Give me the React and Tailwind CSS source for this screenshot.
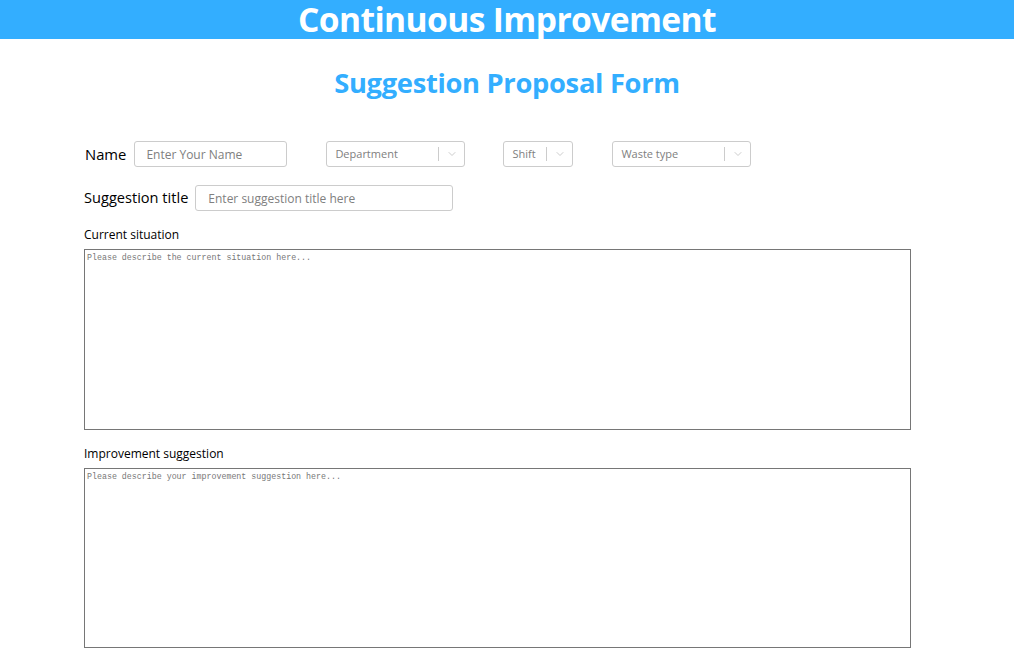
import { ChevronDown } from 'lucide-react';

function Select({ label, width }) {
  return (
    <div
      className={`flex h-[26px] items-center rounded-[3px] border border-[#cccccc] bg-white pl-2 ${width}`}
    >
      <span className="flex-1 text-[11px] text-[#808080]">{label}</span>
      <span className="h-[14px] w-px bg-[#cccccc]" />
      <span className="flex w-[25px] justify-center text-[#bbbbbb]">
        <ChevronDown size={12} strokeWidth={1.5} />
      </span>
    </div>
  );
}

export default function App() {
  return (
    <div className="min-h-[662px] bg-white font-['Open_Sans',sans-serif] text-black">
      <header className="flex h-[39px] items-center justify-center bg-[#33aeff]">
        <h1 className="text-[33.6px] font-bold leading-[39px] tracking-[-0.6px] text-white">
          Continuous Improvement
        </h1>
      </header>

      <h2 className="mt-[28px] text-center text-[27.3px] font-bold leading-[32px] tracking-[-0.3px] text-[#33aeff]">
        Suggestion Proposal Form
      </h2>

      <div className="ml-[84px] mt-[42px] w-[827px]">
        <div className="flex items-center">
          <label className="ml-px text-[14.8px]">Name</label>
          <input
            placeholder="Enter Your Name"
            className="ml-[8px] h-[26px] w-[153px] rounded-[3px] border border-[#cccccc] px-[11px] text-[12px] outline-none placeholder:text-[#808080]"
          />
          <div className="ml-[39px]">
            <Select label="Department" width="w-[139px]" />
          </div>
          <div className="ml-[38px]">
            <Select label="Shift" width="w-[70px]" />
          </div>
          <div className="ml-[39px]">
            <Select label="Waste type" width="w-[139px]" />
          </div>
        </div>

        <div className="mt-[18px] flex items-center">
          <label className="text-[14.6px]">Suggestion title</label>
          <input
            placeholder="Enter suggestion title here"
            className="ml-[7px] h-[26px] w-[258px] rounded-[3px] border border-[#cccccc] px-[12px] text-[12px] outline-none placeholder:text-[#808080]"
          />
        </div>

        <div className="mt-[15px] text-[12px]">Current situation</div>
        <textarea
          placeholder="Please describe the current situation here..."
          className="mt-[5px] block h-[181px] w-[827px] resize-none border border-[#767676] px-[2px] py-[2px] font-['Liberation_Mono',monospace] text-[8.3px] outline-none placeholder:text-[#777777]"
        />

        <div className="mt-[15px] text-[12px]">Improvement suggestion</div>
        <textarea
          placeholder="Please describe your improvement suggestion here..."
          className="mt-[5px] block h-[180px] w-[827px] resize-none border border-[#767676] px-[2px] py-[2px] font-['Liberation_Mono',monospace] text-[8.3px] outline-none placeholder:text-[#777777]"
        />
      </div>
    </div>
  );
}
